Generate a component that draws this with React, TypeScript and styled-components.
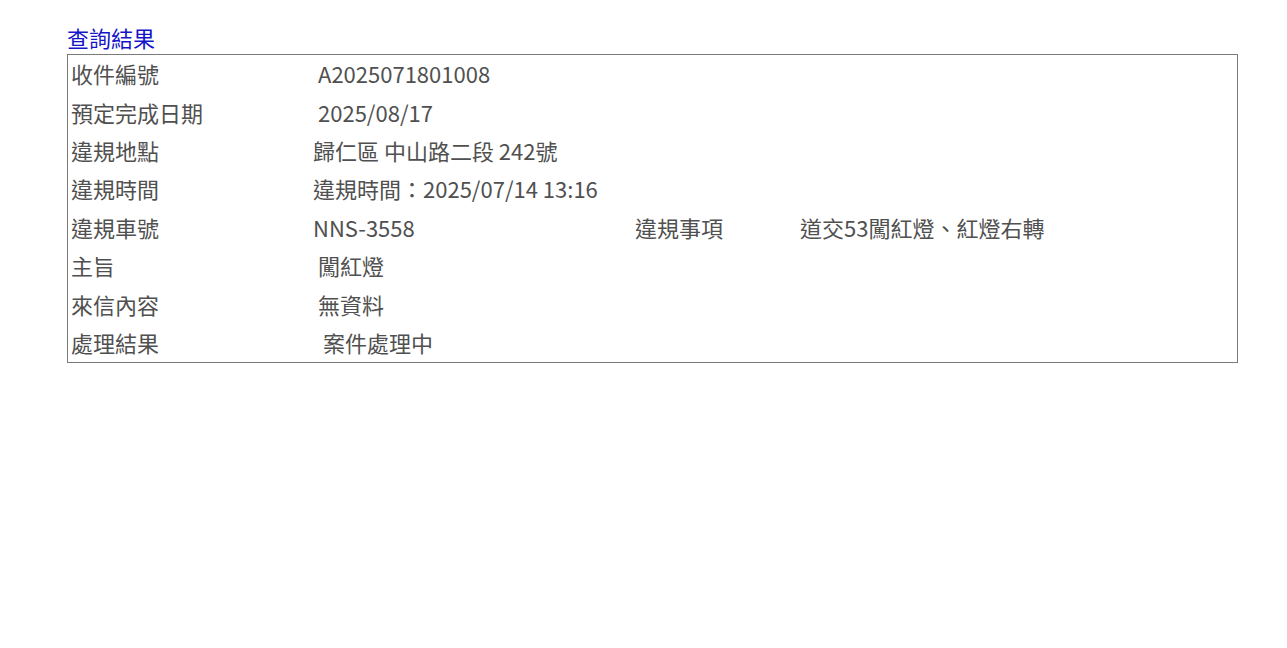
import React from "react";
import styled, { createGlobalStyle } from "styled-components";

const Global = createGlobalStyle`
  html, body { margin: 0; padding: 0; background: #fff; }
  body { font-family: "Noto Sans CJK TC", "Noto Sans", sans-serif; }
`;

const Page = styled.div`
  padding: 24px 49px 0 67px;
  font-size: 22px;
`;

const Title = styled.h2`
  margin: 0 0 4px;
  font-size: 22px;
  font-weight: 400;
  line-height: 26px;
  color: #1414c8;
`;

const Box = styled.div`
  border: 1px solid #7a7a7a;
  width: 1171px;
  box-sizing: border-box;
  display: flex;
  flex-direction: column;
`;

const Row = styled.div`
  display: grid;
  grid-template-columns: 242px 322px 165px 1fr;
  box-sizing: border-box;
  height: 38.4px;
  padding: 0 0 2px 3px;
  align-items: center;
  color: #505050;
  line-height: 1;
`;

const Label = styled.div`
  white-space: nowrap;
`;

const Value = styled.div<{ $indent?: number }>`
  white-space: nowrap;
  padding-left: ${(p) => p.$indent ?? 0}px;
`;

type Item = { label: string; value: string; indent: number; label2?: string; value2?: string };

const items: Item[] = [
  { label: "收件編號", value: "A2025071801008", indent: 5 },
  { label: "預定完成日期", value: "2025/08/17", indent: 5 },
  { label: "違規地點", value: "歸仁區 中山路二段 242號", indent: 0 },
  { label: "違規時間", value: "違規時間：2025/07/14 13:16", indent: 0 },
  { label: "違規車號", value: "NNS-3558", indent: 0, label2: "違規事項", value2: "道交53闖紅燈、紅燈右轉" },
  { label: "主旨", value: "闖紅燈", indent: 5 },
  { label: "來信內容", value: "無資料", indent: 5 },
  { label: "處理結果", value: "案件處理中", indent: 10 },
];

export default function App() {
  return (
    <>
      <Global />
      <Page>
        <Title>查詢結果</Title>
        <Box>
          {items.map((it) => (
            <Row key={it.label}>
              <Label>{it.label}</Label>
              <Value $indent={it.indent}>{it.value}</Value>
              {it.label2 && <Label>{it.label2}</Label>}
              {it.value2 && <Value>{it.value2}</Value>}
            </Row>
          ))}
        </Box>
      </Page>
    </>
  );
}
